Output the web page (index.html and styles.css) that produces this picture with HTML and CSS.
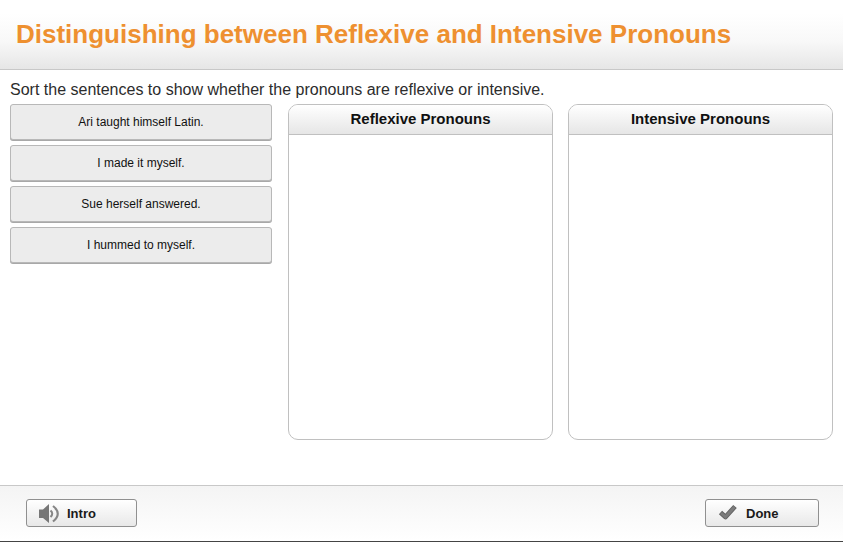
FILE: index.html
```html
<!DOCTYPE html>
<html lang="en">
<head>
<meta charset="utf-8">
<meta name="viewport" content="width=device-width, initial-scale=1">
<title>Distinguishing between Reflexive and Intensive Pronouns</title>
<link rel="stylesheet" href="styles.css">
</head>
<body>
<header class="header">
  <h1 class="title">Distinguishing between Reflexive and Intensive Pronouns</h1>
</header>
<main class="main">
  <p class="prompt">Sort the sentences to show whether the pronouns are reflexive or intensive.</p>
  <div class="board">
    <div class="cards">
      <button class="card" type="button">Ari taught himself Latin.</button>
      <button class="card" type="button">I made it myself.</button>
      <button class="card" type="button">Sue herself answered.</button>
      <button class="card" type="button">I hummed to myself.</button>
    </div>
    <section class="bin">
      <h2 class="bin-title">Reflexive Pronouns</h2>
    </section>
    <section class="bin">
      <h2 class="bin-title">Intensive Pronouns</h2>
    </section>
  </div>
</main>
<footer class="footer">
  <button class="action" type="button">
    <svg class="icon" width="20" height="20" viewBox="0 0 20 20" aria-hidden="true">
      <path d="M0 5.500h4L10 0v19l-6-5H0z" fill="#777"/>
      <path d="M11.500 6.500q3.500 3 0 6.500" fill="none" stroke="#858585" stroke-width="2"/>
      <path d="M14 2q9.500 7.500 0 15.500" fill="none" stroke="#858585" stroke-width="2.200"/>
    </svg>
    Intro
  </button>
  <button class="action action-done" type="button">
    <svg class="icon" width="20" height="20" viewBox="0 0 20 20" aria-hidden="true">
      <path d="M2.500 8.500l5 4.500L17 2.500" fill="none" stroke="#626262" stroke-width="4.800" stroke-linejoin="round"/>
      <path d="M3 9l4.500 4L16.500 3" fill="none" stroke="#7c7c7c" stroke-width="3"/>
    </svg>
    Done
  </button>
</footer>
</body>
</html>
```
FILE: styles.css
```css
* {
  box-sizing: border-box;
}

body {
  margin: 0;
  min-height: 100vh;
  display: flex;
  flex-direction: column;
  background: #fff;
  color: #111;
  font-family: "Liberation Sans", Arial, sans-serif;
}

.header {
  padding: 16px 16px 17px;
  border-bottom: 1px solid #c8c8c8;
  background: linear-gradient(#fff 20%, #f8f8f8 60%, #e6e6e6);
}

.title {
  margin: 0;
  color: #ee9030;
  font-size: 26px;
  line-height: 36px;
}

.main {
  flex: 1;
  display: flex;
  flex-direction: column;
  padding: 10px 10px 45px;
}

.prompt {
  margin: 0 0 4px;
  color: #2c2c2c;
  font-size: 16px;
  line-height: 20px;
}

.board {
  flex: 1;
  display: grid;
  grid-template-columns: 263fr 265fr 265fr;
  gap: 15px;
}

.cards {
  display: flex;
  flex-direction: column;
  gap: 5px;
  padding-right: 1px;
}

.card {
  height: 36px;
  padding: 0 8px;
  border: 1px solid #b8b8b8;
  border-radius: 3px;
  background: #ececec;
  box-shadow: 0 1px 0 #a8a8a8;
  color: #111;
  font: 12px/16px "Liberation Sans", Arial, sans-serif;
}

.bin {
  overflow: hidden;
  border: 1px solid #c0c0c0;
  border-radius: 10px;
  background: #fff;
}

.bin-title {
  margin: 0;
  padding: 4px 8px 5px;
  border-bottom: 1px solid #c0c0c0;
  background: linear-gradient(#fff, #e6e6e6);
  font-size: 15px;
  line-height: 20px;
  text-align: center;
}

.footer {
  display: flex;
  justify-content: space-between;
  padding: 13px 24px 14px 26px;
  border-top: 1px solid #c8c8c8;
  border-bottom: 1px solid #444;
  background: linear-gradient(#f4f4f4, #fff);
}

.action {
  display: flex;
  align-items: center;
  gap: 8px;
  width: 111px;
  height: 28px;
  padding: 2px 12px 0;
  border: 1px solid #909090;
  border-radius: 3px;
  background: linear-gradient(#fff, #e8e8e8);
  color: #1a1a1a;
  font: bold 13px/16px "Liberation Sans", Arial, sans-serif;
}

.action-done {
  width: 114px;
}

.icon {
  flex: none;
}
```
